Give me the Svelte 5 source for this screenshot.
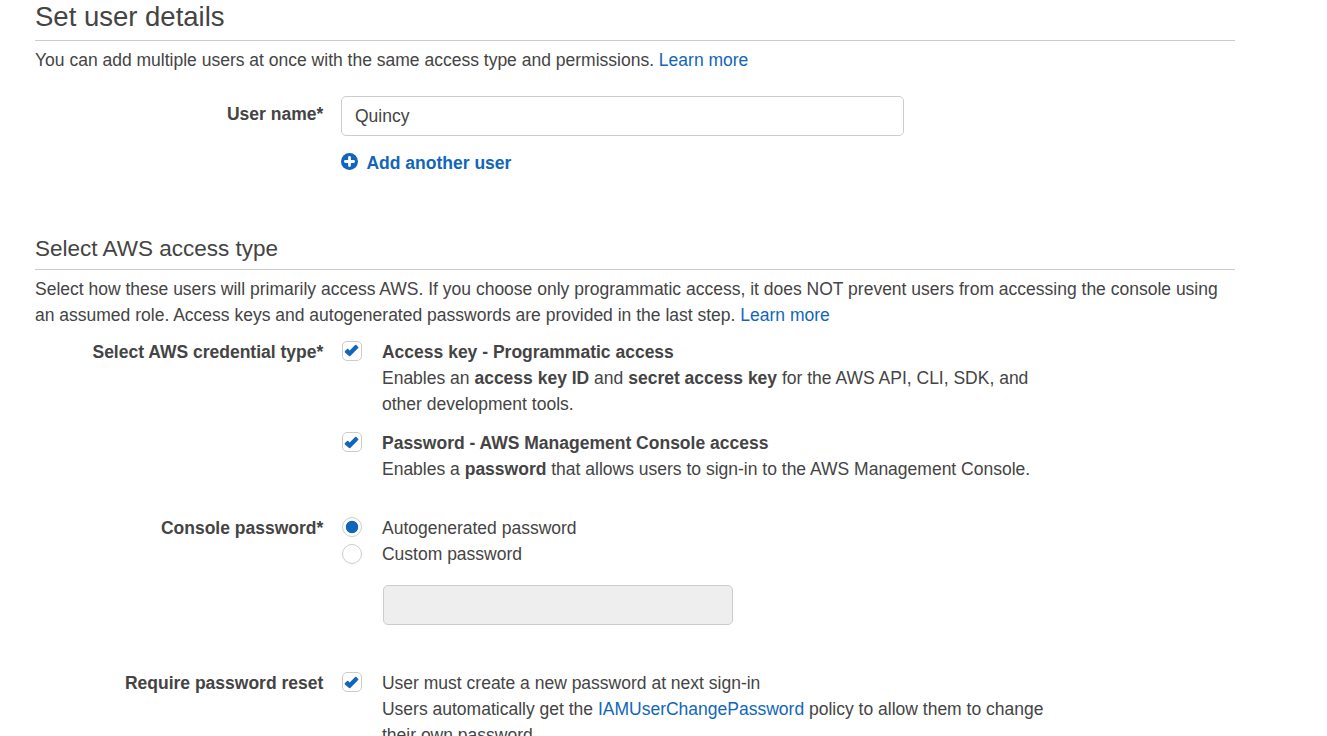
<script>
  let userName = $state('Quincy');
</script>

{#snippet tick(low = false)}
  <svg class:low width="20" height="20" viewBox="0 0 20 20"><path d="M2.9 10.2 5 8.1Q5.6 7.6 6.2 8.1L7.7 9.5 13.1 4Q13.7 3.5 14.3 4L16.2 5.9Q16.8 6.5 16.2 7.1L8.3 14.9Q7.7 15.4 7.1 14.9L2.9 11.4Q2.4 10.8 2.9 10.2Z" fill="#1166bb" /></svg>
{/snippet}

<main>
  <h1>Set user details</h1>
  <p class="intro">You can add multiple users at once with the same access type and permissions. <a href="#learn">Learn more</a></p>

  <div class="row name">
    <div class="label">User name*</div>
    <div class="field">
      <input class="text" bind:value={userName} />
      <button class="add">
        <svg width="17" height="17" viewBox="0 0 17 17"><circle cx="8.5" cy="8.5" r="8.5" fill="#1166bb" /><path d="M8.5 4.4v8.2M4.4 8.5h8.2" stroke="#fff" stroke-width="2.8" stroke-linecap="round" /></svg>
        <span>Add another user</span>
      </button>
    </div>
  </div>

  <h2>Select AWS access type</h2>
  <p class="intro">Select how these users will primarily access AWS. If you choose only programmatic access, it does NOT prevent users from accessing the console using<br />an assumed role. Access keys and autogenerated passwords are provided in the last step. <a href="#learn">Learn more</a></p>

  <div class="row credential">
    <div class="label">Select AWS credential type*</div>
    <div class="options">
      <div class="option">
        <span class="box">{@render tick()}</span>
        <div><b>Access key - Programmatic access</b><br />Enables an <b>access key ID</b> and <b>secret access key</b> for the AWS API, CLI, SDK, and<br />other development tools.</div>
      </div>
      <div class="option">
        <span class="box">{@render tick(true)}</span>
        <div><b>Password - AWS Management Console access</b><br />Enables a <b>password</b> that allows users to sign-in to the AWS Management Console.</div>
      </div>
    </div>
  </div>

  <div class="row console">
    <div class="label">Console password*</div>
    <div>
      <div class="option"><span class="radio on"></span><div>Autogenerated password</div></div>
      <div class="option"><span class="radio off"></span><div>Custom password</div></div>
      <div class="custom"></div>
    </div>
  </div>

  <div class="row reset">
    <div class="label">Require password reset</div>
    <div class="option">
      <span class="box">{@render tick(true)}</span>
      <div>User must create a new password at next sign-in<br />Users automatically get the <a href="#policy">IAMUserChangePassword</a> policy to allow them to change<br />their own password.</div>
    </div>
  </div>
</main>

<style>
  :global(body) { background: #fff; overflow: hidden; }
  main {
    box-sizing: border-box; width: 1327px; height: 736px; overflow: hidden;
    padding: 0 92px 0 35px;
    font: 17.5px/26px "Liberation Sans", Arial, sans-serif; color: #444;
  }
  h1, h2 { margin: 0; box-sizing: border-box; font-weight: 400; border-bottom: 1px solid #ccc; white-space: nowrap; }
  h1 { height: 41px; font-size: 27.5px; line-height: 34px; }
  h2 { height: 37px; margin-top: 57px; font-size: 22.5px; line-height: 31px; }
  .intro { margin: 6px 0 0; white-space: nowrap; }
  a { color: #1166bb; text-decoration: none; }
  .row { display: grid; grid-template-columns: 288.3px auto; column-gap: 17.7px; justify-content: start; white-space: nowrap; }
  .label { text-align: right; font-weight: 700; }
  .name { margin-top: 23px; }
  .name .label { padding-top: 5px; }
  .text {
    display: block; box-sizing: border-box; width: 563px; height: 40px; padding: 0 13px;
    border: 1px solid #ccc; border-radius: 5px; outline: 0; font: inherit; color: #444;
  }
  .add {
    display: flex; align-items: center; gap: 8.5px; height: 26px; margin-top: 14px; padding: 0;
    border: 0; background: none; font: inherit; font-weight: 700; color: #1166bb;
  }
  .add svg { margin-bottom: 3px; }
  .credential { margin-top: 11px; }
  .options { display: grid; row-gap: 13px; }
  .option { display: grid; grid-template-columns: 22px auto; column-gap: 19px; }
  .box, .radio { display: block; box-sizing: border-box; width: 20px; height: 20px; margin: 2px 0 0 1px; border: 1px solid #ccc; }
  .box { border-radius: 5px; }
  .box svg { display: block; margin: -1px; }
  .box .low { margin-top: 0; }
  .radio { border-radius: 50%; }
  .on { background: radial-gradient(circle, #1166bb 5.8px, #fff 6.6px); }
  .off { margin-top: 3px; }
  .console { margin-top: 33px; }
  .custom { box-sizing: border-box; width: 350px; height: 40px; margin: 18px 0 0 42px; border: 1px solid #ccc; border-radius: 5px; background: #eee; }
  .reset { margin-top: 45px; }
</style>
